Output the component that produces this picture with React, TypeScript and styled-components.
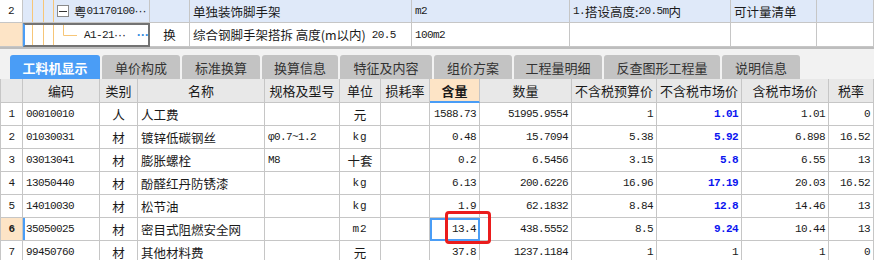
import styled, { createGlobalStyle } from 'styled-components';

const GlobalStyle = createGlobalStyle`
  body {
    margin: 0;
    background: #ffffff;
    font-family: "Noto Sans CJK SC", "Noto Sans", sans-serif;
    color: #1a1a1a;
  }
`;

const LINE = '#c6c6c6';
const PEACH = '#fde4c6';
const BLUE = '#4a9df6';
const ORANGE = '#f7c678';

const Page = styled.div`
  width: 874px;
  height: 260px;
  overflow: hidden;
  background: #f2f2f2;
`;

/* ---------- top list ---------- */

const TopGrid = styled.div`
  display: grid;
  grid-template-columns: 23px 127px 40px 222px 158px 161px 86px 57px;
  grid-template-rows: 23px 24px;
  background: #fff;
`;

const TopCell = styled.div<{ $bg?: string; $align?: string; $selected?: boolean }>`
  box-sizing: border-box;
  display: flex;
  align-items: center;
  justify-content: ${(p) => p.$align || 'flex-start'};
  padding: 0 3px;
  font-size: 12.5px;
  white-space: nowrap;
  overflow: hidden;
  background: ${(p) => p.$bg || 'transparent'};
  border-right: 1px solid ${LINE};
  border-bottom: 1px solid ${LINE};
  ${(p) =>
    p.$selected &&
    `
    border: 2px solid #737373;
    border-left: 2px solid ${BLUE};
    padding: 0;
  `}
`;

const TreeCell = styled(TopCell)`
  padding: 0;
`;

const Guides = styled.svg`
  flex: none;
  display: block;
`;

const ToggleBox = styled.span`
  flex: none;
  box-sizing: border-box;
  width: 12px;
  height: 12px;
  border: 1px solid #8a8a8a;
  background: #fff;
  display: flex;
  align-items: center;
  justify-content: center;
  margin-right: 5px;
  &::before {
    content: '';
    width: 8px;
    height: 1px;
    background: #333;
  }
`;

const Mono = styled.span<{ $bold?: boolean; $color?: string }>`
  font-family: "Liberation Mono", "Noto Sans CJK SC", monospace;
  font-size: 11px;
  letter-spacing: -0.6px;
  font-weight: ${(p) => (p.$bold ? 700 : 400)};
  color: ${(p) => p.$color || 'inherit'};
`;

const Ellipsis = styled.span`
  font-family: "Liberation Sans", sans-serif;
  font-size: 12px;
  letter-spacing: 0;
`;

const MoreDots = styled(Ellipsis)`
  margin-left: 11px;
  color: #2f8ae0;
  font-weight: 700;
`;

const Separator = styled.div`
  height: 2px;
  background: #bdbdbd;
`;

/* ---------- tabs ---------- */

const TabBar = styled.div`
  display: flex;
  gap: 2px;
  height: 30px;
  box-sizing: border-box;
  padding: 6px 0 0 10px;
`;

const Tab = styled.div<{ $active?: boolean; $w: number }>`
  width: ${(p) => p.$w}px;
  height: 24px;
  border-radius: 3px 3px 0 0;
  display: flex;
  align-items: center;
  justify-content: center;
  font-size: 13px;
  background: ${(p) => (p.$active ? BLUE : '#c3c3c3')};
  color: ${(p) => (p.$active ? '#fff' : '#333')};
  font-weight: ${(p) => (p.$active ? 700 : 400)};
`;

/* ---------- material grid ---------- */

const Grid = styled.div`
  display: grid;
  grid-template-columns: 23px 77px 38px 127px 75px 41px 49px 50px 92px 85px 85px 87px 45px;
  grid-template-rows: 24px;
  grid-auto-rows: 23px;
  background: #fff;
`;

const Head = styled.div<{ $hot?: boolean }>`
  box-sizing: border-box;
  display: flex;
  align-items: center;
  justify-content: center;
  font-size: 13px;
  white-space: nowrap;
  background: ${(p) => (p.$hot ? PEACH : '#e8e8e8')};
  font-weight: ${(p) => (p.$hot ? 700 : 400)};
  border-right: 1px solid ${LINE};
  border-bottom: ${(p) => (p.$hot ? `2px solid ${BLUE}` : `1px solid ${LINE}`)};
  &:first-child {
    border-left: 1px solid ${LINE};
  }
`;

const Cell = styled.div<{ $align?: string; $bg?: string; $first?: boolean; $focus?: boolean; $mark?: boolean }>`
  position: relative;
  box-sizing: border-box;
  display: flex;
  align-items: center;
  justify-content: ${(p) => p.$align || 'flex-start'};
  padding: 0 3px;
  font-size: 12.5px;
  white-space: nowrap;
  background: ${(p) => p.$bg || '#fff'};
  border-right: 1px solid ${LINE};
  border-bottom: 1px solid ${LINE};
  border-left: ${(p) => (p.$first ? `1px solid ${LINE}` : 'none')};
  ${(p) => p.$mark && `box-shadow: inset 2px 0 0 ${BLUE};`}
  ${(p) => p.$focus && `outline: 2px solid ${BLUE}; outline-offset: -2px; z-index: 2;`}
`;

const UnitText = styled(Mono)`
  letter-spacing: 1px;
`;

const RedMark = styled.span`
  position: absolute;
  left: 15px;
  top: -7px;
  width: 46px;
  height: 33px;
  box-sizing: border-box;
  border: 3px solid #ea1c1c;
  border-radius: 4px;
  pointer-events: none;
  z-index: 3;
`;

type Row = {
  code: string;
  kind: string;
  name: string;
  spec: string;
  unit: string;
  qty: string;
  amount: string;
  budget: string;
  market: string;
  marketTax: string;
  rate: string;
  marketBlue: boolean;
};

const rows: Row[] = [
  { code: '00010010', kind: '人', name: '人工费', spec: '', unit: '元', qty: '1588.73', amount: '51995.9554', budget: '1', market: '1.01', marketTax: '1.01', rate: '0', marketBlue: true },
  { code: '01030031', kind: '材', name: '镀锌低碳钢丝', spec: 'φ0.7~1.2', unit: 'kg', qty: '0.48', amount: '15.7094', budget: '5.38', market: '5.92', marketTax: '6.898', rate: '16.52', marketBlue: true },
  { code: '03013041', kind: '材', name: '膨胀螺栓', spec: 'M8', unit: '十套', qty: '0.2', amount: '6.5456', budget: '3.15', market: '5.8', marketTax: '6.55', rate: '13', marketBlue: true },
  { code: '13050440', kind: '材', name: '酚醛红丹防锈漆', spec: '', unit: 'kg', qty: '6.13', amount: '200.6226', budget: '16.96', market: '17.19', marketTax: '20.03', rate: '16.52', marketBlue: true },
  { code: '14010030', kind: '材', name: '松节油', spec: '', unit: 'kg', qty: '1.9', amount: '62.1832', budget: '8.84', market: '12.8', marketTax: '14.46', rate: '13', marketBlue: true },
  { code: '35050025', kind: '材', name: '密目式阻燃安全网', spec: '', unit: 'm2', qty: '13.4', amount: '438.5552', budget: '8.5', market: '9.24', marketTax: '10.44', rate: '13', marketBlue: true },
  { code: '99450760', kind: '材', name: '其他材料费', spec: '', unit: '元', qty: '37.8', amount: '1237.1184', budget: '1', market: '1', marketTax: '1', rate: '0', marketBlue: false },
];

const heads = ['', '编码', '类别', '名称', '规格及型号', '单位', '损耗率', '含量', '数量', '不含税预算价', '不含税市场价', '含税市场价', '税率'];
const tabs: [string, number][] = [
  ['工料机显示', 90],
  ['单价构成', 78],
  ['标准换算', 78],
  ['换算信息', 76],
  ['特征及内容', 92],
  ['组价方案', 78],
  ['工程量明细', 88],
  ['反查图形工程量', 116],
  ['说明信息', 78],
];

const App = () => {
  return (
    <>
      <GlobalStyle />
      <Page>
        <TopGrid>
          <TopCell $bg="#fff" $align="center">
            <Mono>2</Mono>
          </TopCell>
          <TreeCell $bg="#dfe9f9">
            <Guides width="34" height="22">
              <line x1="9.5" y1="0" x2="9.5" y2="22" stroke={ORANGE} />
              <line x1="20.5" y1="0" x2="20.5" y2="22" stroke={ORANGE} />
              <line x1="30.5" y1="0" x2="30.5" y2="22" stroke={ORANGE} />
            </Guides>
            <ToggleBox />
            <span>粤</span>
            <Mono>01170100</Mono>
            <Ellipsis>···</Ellipsis>
          </TreeCell>
          <TopCell $bg="#dfe9f9" />
          <TopCell $bg="#dfe9f9">单独装饰脚手架</TopCell>
          <TopCell $bg="#dfe9f9">
            <Mono>m2</Mono>
          </TopCell>
          <TopCell $bg="#dfe9f9">
            <Mono>1.</Mono>搭设高度:<Mono>20.5m</Mono>内
          </TopCell>
          <TopCell $bg="#dfe9f9">可计量清单</TopCell>
          <TopCell $bg="#dfe9f9" />

          <TopCell $bg={PEACH} />
          <TreeCell $selected>
            <Guides width="59" height="20">
              <line x1="7.5" y1="0" x2="7.5" y2="20" stroke={ORANGE} />
              <line x1="18.5" y1="0" x2="18.5" y2="20" stroke={ORANGE} />
              <line x1="28.5" y1="0" x2="28.5" y2="20" stroke={ORANGE} />
              <line x1="38.5" y1="0" x2="38.5" y2="10.5" stroke={ORANGE} />
              <line x1="38.5" y1="10.5" x2="52" y2="10.5" stroke={ORANGE} />
            </Guides>
            <Mono>A1-21</Mono>
            <Ellipsis>···</Ellipsis>
            <MoreDots>···</MoreDots>
          </TreeCell>
          <TopCell $align="center">换</TopCell>
          <TopCell>
            综合钢脚手架搭拆 高度(m以内) <Mono>&nbsp;20.5</Mono>
          </TopCell>
          <TopCell>
            <Mono>100m2</Mono>
          </TopCell>
          <TopCell />
          <TopCell />
          <TopCell />
        </TopGrid>
        <Separator />

        <TabBar>
          {tabs.map(([label, w], i) => (
            <Tab key={label} $w={w} $active={i === 0}>
              {label}
            </Tab>
          ))}
        </TabBar>

        <Grid>
          {heads.map((h, i) => (
            <Head key={i} $hot={h === '含量'}>
              {h}
            </Head>
          ))}
          {rows.map((r, i) => {
            const current = i === 5;
            return [
              <Cell key={`n${i}`} $first $align="center" $bg={current ? PEACH : '#fff'}>
                <Mono $bold={current}>{i + 1}</Mono>
              </Cell>,
              <Cell key={`c${i}`} $mark={current}>
                <Mono>{r.code}</Mono>
              </Cell>,
              <Cell key={`k${i}`} $align="center">{r.kind}</Cell>,
              <Cell key={`m${i}`}>{r.name}</Cell>,
              <Cell key={`s${i}`}>{r.spec && <Mono>{r.spec}</Mono>}</Cell>,
              <Cell key={`u${i}`} $align="center">
                {/^[a-z0-9]+$/i.test(r.unit) ? <UnitText>{r.unit}</UnitText> : r.unit}
              </Cell>,
              <Cell key={`l${i}`} />,
              <Cell key={`q${i}`} $align="flex-end" $focus={current}>
                <Mono>{r.qty}</Mono>
                {current && <RedMark />}
              </Cell>,
              <Cell key={`a${i}`} $align="flex-end">
                <Mono>{r.amount}</Mono>
              </Cell>,
              <Cell key={`b${i}`} $align="flex-end">
                <Mono>{r.budget}</Mono>
              </Cell>,
              <Cell key={`p${i}`} $align="flex-end">
                <Mono $bold={r.marketBlue} $color={r.marketBlue ? '#0a14f0' : undefined}>
                  {r.market}
                </Mono>
              </Cell>,
              <Cell key={`t${i}`} $align="flex-end">
                <Mono>{r.marketTax}</Mono>
              </Cell>,
              <Cell key={`r${i}`} $align="flex-end">
                <Mono>{r.rate}</Mono>
              </Cell>,
            ];
          })}
        </Grid>
      </Page>
    </>
  );
};

export default App;
